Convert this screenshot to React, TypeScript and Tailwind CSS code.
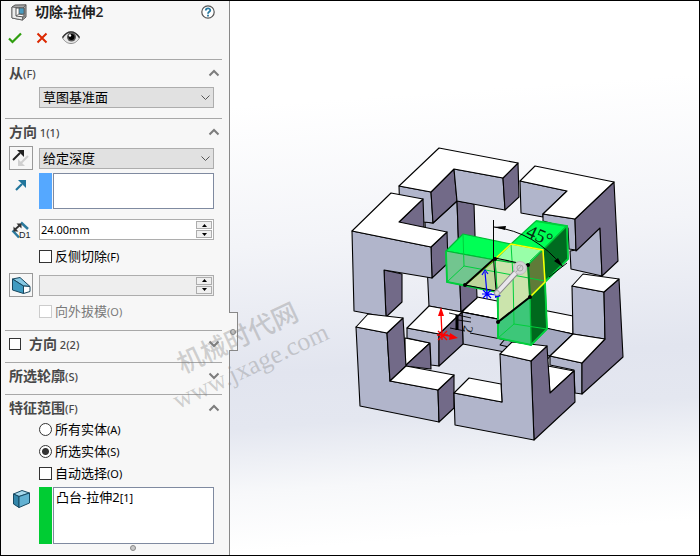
import { useState, type ReactNode } from "react";

const TOP = "#ffffff";
const FRONT = "#b1b5cb";
const SIDE = "#726a88";

interface Face {
  points: string;
  fill: string;
}

// Listed back to front, so later faces cover earlier ones
const faces: Face[] = [
  // rear lower beam
  { points: "462,312 477,297 573,316 573,334", fill: TOP },
  { points: "462,312 573,334 550,356 547,360 463,344", fill: FRONT },
  { points: "519,322 573,334 550,356 500,345", fill: "#a4a8c0" },
  // upper rear bracket
  { points: "433,223 457,201 461,312 429,306 425,222", fill: FRONT },
  { points: "457,201 474,204 477,298 461,312", fill: SIDE },
  { points: "399,186 431,192 433,223 424,222 400,217", fill: FRONT },
  { points: "431,192 454,169 457,201 433,223", fill: SIDE },
  { points: "454,169 503,178 505,210 457,201", fill: FRONT },
  { points: "503,178 518,163 519,197 505,210", fill: SIDE },
  { points: "439,148 518,163 503,178 454,169 431,192 399,186", fill: TOP },
  // upper left bracket
  { points: "399,222 423,199 424,227 400,228", fill: SIDE },
  { points: "384,270 402,274 402,302 386,317", fill: SIDE },
  { points: "431,247 447,232 448,263 432,278", fill: SIDE },
  { points: "352,231 431,247 432,278 384,270 386,317 354,311", fill: FRONT },
  { points: "352,231 391,193 423,199 399,222 447,232 431,247", fill: TOP },
  // middle left block
  { points: "405,338 430,343 405,366", fill: TOP },
  { points: "405,366 430,343 431,369", fill: SIDE },
  { points: "407,328 439,334 439,366 431,365 430,343 407,338", fill: FRONT },
  { points: "439,334 462,312 463,344 439,366", fill: SIDE },
  { points: "407,328 429,306 462,312 439,334", fill: TOP },
  // lower left bracket
  { points: "356,327 387,333 390,381 438,390 439,422 360,406", fill: FRONT },
  { points: "387,333 403,318 406,366 390,381", fill: SIDE },
  { points: "438,390 454,375 454,408 439,422", fill: SIDE },
  { points: "390,381 406,366 454,375 438,390", fill: TOP },
  { points: "356,327 368,314 403,318 387,333", fill: TOP },
  // right bracket
  { points: "550,356 582,363 582,394 575,393 574,370 550,365", fill: FRONT },
  { points: "572,286 604,292 605,339 573,334", fill: FRONT },
  { points: "604,292 619,279 623,357 582,394 582,363 605,339", fill: SIDE },
  { points: "550,356 573,334 605,339 582,363", fill: TOP },
  { points: "572,286 583,274 619,279 604,292", fill: TOP },
  // lower front bracket
  { points: "548,366 574,371 550,393", fill: TOP },
  { points: "531,361 547,346 550,393 574,371 575,402 534,440", fill: SIDE },
  { points: "454,393 502,402 500,354 531,361 534,440 455,425", fill: FRONT },
  { points: "454,393 469,378 501,384 502,402", fill: TOP },
  { points: "500,354 512,342 547,346 531,361", fill: TOP },
  // upper right bracket
  { points: "520,181 567,191 543,214 543,217 521,213", fill: FRONT },
  { points: "570,251 576,250 600,227 602,276 571,269", fill: FRONT },
  { points: "543,214 575,219 576,250 569,249 568,228 543,221", fill: FRONT },
  { points: "575,219 614,182 618,261 602,276 600,228 576,251", fill: SIDE },
  { points: "535,166 614,182 575,219 543,214 567,191 520,181", fill: TOP },
];

const cutFaces: Face[] = [
  { points: "446,251 463,234 511,244 495,260", fill: "#00ff55" },
  { points: "446,251 495,260 497,292 447,282", fill: "#72c58f" },
  { points: "511,244 536,221 567,226 543,250", fill: "#00ff55" },
  { points: "543,250 567,226 568,259 545,281", fill: "#006b20" },
  { points: "495,260 511,244 543,250 528,265", fill: "#98ffa8" },
  { points: "530,297 545,283 547,329 531,345", fill: "#00691d" },
  { points: "498,322 530,297 531,345 498,338", fill: "#3dc779" },
  { points: "528,265 543,250 545,282 530,297", fill: "#5f7b38" },
  { points: "495,260 528,265 530,297 498,322 497,292", fill: "#cbe4ac" },
  { points: "465,285 495,260 497,292", fill: "#bfd69c" },
];

function Model() {
  return (
    <svg viewBox="230 1 469 554" className="h-full w-full" role="img" aria-label="3D">
      <g stroke="#000" strokeWidth="1.1" strokeLinejoin="round">
        {faces.map((face, i) => (
          <polygon key={i} points={face.points} fill={face.fill} />
        ))}
      </g>
      <path d="M470 333L511 341M462 312L519 323" stroke="#000" fill="none" />

      {/* cut preview */}
      <g stroke="#00b935" strokeWidth="1.2" strokeLinejoin="round">
        {cutFaces.map((face, i) => (
          <polygon key={i} points={face.points} fill={face.fill} />
        ))}
      </g>
      <g stroke="#00cf3c" fill="none" strokeWidth="1">
        <path d="M463 234L464 266L447 282M464 266L545 281M511 244L513 276L514 324L498 338M514 324L547 329M530 261L567 226" />
        <path d="M446 251L447 282L497 292M498 292V338L531 345L547 329L545 282L568 259L567 226L536 221" strokeWidth="1.8" />
      </g>
      <path d="M465 285L495 259L511 244L543 250L545 282L530 297" fill="none" stroke="#ffff00" strokeWidth="1.5" />
      <g stroke="#000" strokeWidth="2" fill="none">
        <path d="M465 285L495 258M498 322L530 297" />
        <path d="M495 258L528 265M465 285L496 291" strokeWidth="1.2" />
      </g>
      <path d="M528 265L530 297" stroke="#008a22" strokeWidth="2" />
      <g fill="#000">
        <circle cx="465" cy="285" r="2" />
        <circle cx="495" cy="259" r="2" />
        <circle cx="528" cy="265" r="2" />
        <circle cx="530" cy="297" r="2" />
        <circle cx="498" cy="322" r="2" />
      </g>

      {/* angle dimension */}
      <path d="M493.5 220V259L496 290M494 227Q535 232 563 267M549 277L567 263" fill="none" stroke="#000" />
      <path d="M494 227L506 226L505 230ZM563 267L554 261L558 258Z" fill="#000" />
      <text
        transform="translate(525 236) rotate(24)"
        className="font-['Liberation_Serif',serif] text-[19px]"
        fill="#052b10"
      >
        45°
      </text>

      {/* distance dimension */}
      <g stroke="#000" fill="none">
        <path d="M449 313L471 318M458 320L471 322M450 328L465 331" strokeWidth="0.9" />
        <path d="M457 315V330" strokeWidth="3" />
      </g>
      <text
        transform="translate(464 325) rotate(100)"
        className="font-['Liberation_Serif',serif] text-[14px]"
        fill="#111"
      >
        2
      </text>

      {/* sketch origin */}
      <g stroke="#0000ff" fill="none" strokeWidth="1.2">
        <path d="M487 294L485 272M487 294L497 295M482 294H492M487 289V299M483 290L491 298M491 290L483 298" />
        <path d="M482 275L485 270L488 274" />
      </g>
      <path d="M495 292L501 296L495 298Z" fill="#0000ff" />

      {/* part origin */}
      <g stroke="#ff0000" fill="none" strokeWidth="1.3">
        <path d="M442 335L441 314M442 335L451 336M437 335H448M438 331L447 340M447 331L438 340M442 331V340" />
      </g>
      <path d="M438 316L441 307L444 316ZM450 333L458 338L449 340Z" fill="#ff0000" />

      {/* drag handle */}
      <path d="M497 293L519 269" stroke="#8a8a8a" strokeWidth="6" strokeLinecap="round" />
      <path d="M497 293L519 269" stroke="#e9e6ec" strokeWidth="4" strokeLinecap="round" />
      <circle cx="520" cy="268" r="6.5" fill="#d5d3d6" stroke="#bcbabd" />
      <circle cx="520" cy="268" r="3" fill="none" stroke="#aaa" />
      <path d="M516 272L522 265" stroke="#aaa" />
      <circle cx="497" cy="293" r="2.5" fill="#dedbe0" stroke="#999" strokeWidth="0.8" />
    </svg>
  );
}

function Chevron({ open }: { open: boolean }) {
  return (
    <svg viewBox="0 0 12 8" className="h-2 w-3" fill="none" stroke="#7d7d7d" strokeWidth="2">
      <path d={open ? "M1.5 6.5L6 2L10.5 6.5" : "M1.5 1.5L6 6L10.5 1.5"} />
    </svg>
  );
}

interface SectionProps {
  title: string;
  hint: string;
  open: boolean;
  onToggle: () => void;
  before?: ReactNode;
  children?: ReactNode;
}

function Section({ title, hint, open, onToggle, before, children }: SectionProps) {
  return (
    <section className="ml-1 mr-[7px] border-t border-[#a8a8a8] pl-1">
      <div className="flex h-[26px] items-center pr-[2px]">
        {before}
        <h2 className="flex-1 text-[14px] font-bold leading-[20px] text-[#484848]">
          {title}
          <span className="text-[11px] font-medium">{hint}</span>
        </h2>
        <button type="button" aria-label={title} aria-expanded={open} onClick={onToggle}>
          <Chevron open={open} />
        </button>
      </div>
      {children}
    </section>
  );
}

function Dropdown({ label, value }: { label: string; value: string }) {
  return (
    <div className="relative flex-1">
      <select
        aria-label={label}
        className="block h-[21px] w-full appearance-none border border-[#adadad] bg-[#e1e1e1] pl-[3px] text-[13px] leading-[19px] text-black"
      >
        <option>{value}</option>
      </select>
      <svg viewBox="0 0 9 6" className="pointer-events-none absolute right-1 top-2 h-[6px] w-[9px]" fill="none" stroke="#555">
        <path d="M0.5 0.5L4.5 4.5L8.5 0.5" />
      </svg>
    </div>
  );
}

function SpinButton({ label, down }: { label: string; down?: boolean }) {
  return (
    <button type="button" aria-label={label} className="flex h-2 w-4 items-center justify-center border border-[#adadad] bg-[#f0f0f0]">
      <svg viewBox="0 0 5 3" className="h-[3px] w-[5px]">
        <path d={down ? "M0 0H5L2.5 3Z" : "M0 3H5L2.5 0Z"} />
      </svg>
    </button>
  );
}

function NumberBox({ label, value, disabled }: { label: string; value: string; disabled?: boolean }) {
  return (
    <div className={`flex h-[21px] flex-1 items-center border border-[#adadad] pr-[1px] ${disabled ? "bg-[#eeeeee]" : "bg-white"}`}>
      <input
        aria-label={label}
        defaultValue={value}
        disabled={disabled}
        className="h-full w-0 flex-1 bg-transparent px-[1px] text-[11px] text-black outline-none"
      />
      <div className="flex flex-col gap-[1px]">
        <SpinButton label="+" />
        <SpinButton label="-" down />
      </div>
    </div>
  );
}

interface ChoiceProps {
  type: "checkbox" | "radio";
  label: string;
  hint: string;
  checked?: boolean;
  disabled?: boolean;
  name?: string;
}

function Choice({ type, label, hint, checked, disabled, name }: ChoiceProps) {
  return (
    <label className={`flex h-4 items-center gap-[3px] text-[13px] leading-4 ${disabled ? "text-[#7a7a7a]" : "text-black"}`}>
      <input
        type={type}
        name={name}
        defaultChecked={checked}
        disabled={disabled}
        className={`h-[13px] w-[13px] appearance-none border bg-white ${disabled ? "border-[#cccccc]" : "border-[#333333]"} ${
          type === "radio"
            ? "rounded-full checked:bg-[radial-gradient(circle,#333_0_3px,#fff_4px)]"
            : "checked:bg-[#333333]"
        }`}
      />
      <span>
        {label}
        <span className="text-[11px]">{hint}</span>
      </span>
    </label>
  );
}

function CutIcon() {
  return (
    <svg viewBox="0 0 16 17" className="h-[17px] w-4" stroke="#555" strokeLinejoin="round">
      <path d="M1 3L4 1L15 0.8V13L11.500 16L1 14Z" fill="#a9a9a9" />
      <path d="M1 3L11.500 4.500V16L1 14Z" fill="#ececec" strokeWidth="0.8" />
      <path d="M11.500 4.500L15 0.800" strokeWidth="0.8" />
      <path d="M5 4H13V13L5 12Z" fill="#fff" />
      <path d="M8 4H13V10H8Z" fill="#4a9bc0" strokeWidth="0.8" />
      <path d="M5 12L8 10L13 11" fill="none" strokeWidth="0.8" />
    </svg>
  );
}

function EyeIcon() {
  return (
    <svg viewBox="0 0 18 14" className="h-[14px] w-[18px]">
      <path d="M0.5 7C3 2.5 6 1 9 1S15 2.500 17.500 7C15 11 12 12.500 9 12.500S3 11 0.500 7Z" fill="#e8e8e8" stroke="#777" strokeWidth="0.8" />
      <path d="M0.5 6.500C4 1.500 6.500 1 9 1S14.500 2 17.500 6.500" fill="none" stroke="#333" strokeWidth="1.500" />
      <circle cx="9.500" cy="6" r="4.500" fill="#555" />
      <circle cx="9.500" cy="6" r="3" fill="#000" />
      <circle cx="8" cy="4.500" r="1.200" fill="#fff" />
    </svg>
  );
}

function DepthIcon() {
  return (
    <svg viewBox="0 0 20 18" className="h-[18px] w-5" fill="none">
      <path d="M10 1.500L17 8M1.500 9.500L8 16.500" stroke="#2b7a9e" strokeWidth="2.500" />
      <path d="M3.500 9L9.500 3.500" stroke="#333" strokeWidth="1.800" />
      <path d="M5.500 2.500H10.500V7.500ZM2.500 5.500V10.500H7.500Z" fill="#333" />
      <text x="8" y="17" className="font-['Liberation_Sans',sans-serif] text-[9px]" fill="#222">
        D1
      </text>
    </svg>
  );
}

function DraftIcon() {
  return (
    <svg viewBox="0 0 19 17" className="h-[17px] w-[19px]" stroke="#18475e" strokeLinejoin="round">
      <path d="M0.500 2L8 0.500L18 9.500L11.500 9Z" fill="#86c9e4" />
      <path d="M0.500 2L11.500 9V16.500L0.500 13Z" fill="#3f9bc1" />
      <path d="M11.500 9L18 9.500V14.500L11.500 16.500Z" fill="#fff" />
    </svg>
  );
}

function BodyIcon() {
  return (
    <svg viewBox="0 0 17 18" className="h-[18px] w-[17px]" stroke="#174a63" strokeLinejoin="round">
      <path d="M0.500 4L9 0.500L16.500 3L6 6.500Z" fill="#a6d8ec" />
      <path d="M0.500 4L6 6.500V17.500L0.500 14Z" fill="#3286aa" />
      <path d="M6 6.500L16.500 3V13L6 17.500Z" fill="#62b1d2" />
    </svg>
  );
}

export default function App() {
  const [open, setOpen] = useState({ from: true, dir1: true, dir2: false, contours: false, scope: true });
  const toggle = (key: keyof typeof open) => setOpen({ ...open, [key]: !open[key] });

  return (
    <div className="relative flex h-screen overflow-hidden border border-black bg-white font-['Noto_Sans','Noto_Sans_CJK_SC',sans-serif]">
      <aside className="flex w-[229px] shrink-0 flex-col border-r border-[#888888] bg-[#f7f7f7]">
        <header>
          <div className="flex h-[22px] items-center pl-[10px] pr-[14px]">
            <CutIcon />
            <h1 className="ml-2 flex-1 text-[14px] font-bold leading-5 text-[#222222]">
              切除-拉伸<span className="font-medium">2</span>
            </h1>
            <button type="button" aria-label="?">
              <svg viewBox="0 0 14 14" className="h-[14px] w-[14px]" fill="none">
                <circle cx="7" cy="7" r="6.200" stroke="#555" strokeWidth="1.200" fill="#fff" />
                <path d="M4.800 5.500C4.800 2.800 9.300 2.800 9.300 5.300C9.300 6.800 7 6.800 7 8.700" stroke="#2678a0" strokeWidth="1.800" />
                <path d="M7 9.800V11.500" stroke="#2678a0" strokeWidth="1.800" />
              </svg>
            </button>
          </div>
          <div className="mb-[6px] flex h-[30px] items-center gap-[14px] pl-[7px]">
            <button type="button" aria-label="OK">
              <svg viewBox="0 0 14 12" className="h-3 w-[14px]" fill="none" stroke="#2f9e0f" strokeWidth="2.200">
                <path d="M1 6.500L4.500 10L13 1.500" />
              </svg>
            </button>
            <button type="button" aria-label="Cancel">
              <svg viewBox="0 0 12 12" className="h-3 w-3" fill="none" stroke="#dc2800" strokeWidth="2">
                <path d="M1.500 1.500L10.500 10.500M10.500 1.500L1.500 10.500" />
              </svg>
            </button>
            <button type="button" aria-label="Preview">
              <EyeIcon />
            </button>
          </div>
        </header>

        <Section title="从" hint="(F)" open={open.from} onToggle={() => toggle("from")}>
          {open.from && (
            <div className="flex pb-[10px] pl-[30px] pr-2 pt-[1px]">
              <Dropdown label="从" value="草图基准面" />
            </div>
          )}
        </Section>

        <Section title="方向" hint=" 1(1)" open={open.dir1} onToggle={() => toggle("dir1")}>
          {open.dir1 && (
            <div className="pb-[9px] pr-2 pt-[1px]">
              <div className="flex items-center gap-[6px]">
                <button type="button" aria-label="反向" className="flex h-6 w-6 items-center justify-center border border-[#999999]">
                  <svg viewBox="0 0 18 18" className="h-[18px] w-[18px]">
                    <path d="M1 11L8 4" stroke="#222" strokeWidth="2" />
                    <path d="M5 1H12V8Z" fill="#222" />
                    <path d="M9 14L16 7" stroke="#d0d0d0" strokeWidth="2" />
                    <path d="M6 10V17H13Z" fill="#d0d0d0" />
                  </svg>
                </button>
                <Dropdown label="方向" value="给定深度" />
              </div>
              <div className="mt-[3px] flex">
                <svg viewBox="0 0 12 12" className="ml-[6px] mr-3 mt-[6px] h-3 w-3">
                  <path d="M1 11L7 5" stroke="#22769c" strokeWidth="2.200" />
                  <path d="M3 1H11V9Z" fill="#22769c" />
                </svg>
                <div className="h-9 w-[14px] border-r border-[#f7f7f7] bg-[#55a8ff]" />
                <ul role="listbox" aria-label="拉伸方向" className="h-9 flex-1 border border-[#7f8aa0] bg-white" />
              </div>
              <div className="mt-[10px] flex items-center">
                <div className="flex w-[30px] pl-[2px]">
                  <DepthIcon />
                </div>
                <NumberBox label="深度" value="24.00mm" />
              </div>
              <div className="mt-2 pl-[30px]">
                <Choice type="checkbox" label="反侧切除" hint="(F)" />
              </div>
              <div className="mt-[9px] flex items-center gap-[6px]">
                <button type="button" aria-label="拔模" className="flex h-6 w-6 items-center justify-center border border-[#999999]">
                  <DraftIcon />
                </button>
                <NumberBox label="拔模角度" value="" disabled />
              </div>
              <div className="mt-[6px] pb-[2px] pl-[30px]">
                <Choice type="checkbox" label="向外拔模" hint="(O)" disabled />
              </div>
            </div>
          )}
        </Section>

        <div className="pb-[5px]">
          <Section
            title="方向"
            hint=" 2(2)"
            open={open.dir2}
            onToggle={() => toggle("dir2")}
            before={
              <input
                type="checkbox"
                aria-label="方向 2"
                className="mr-2 h-3 w-3 appearance-none border border-[#333333] bg-white checked:bg-[#333333]"
              />
            }
          />
        </div>
        <div className="pb-[5px]">
          <Section title="所选轮廓" hint="(S)" open={open.contours} onToggle={() => toggle("contours")} />
        </div>

        <Section title="特征范围" hint="(F)" open={open.scope} onToggle={() => toggle("scope")}>
          {open.scope && (
            <div className="pr-2">
              <div className="flex flex-col gap-[6px] pl-[30px]">
                <Choice type="radio" name="scope" label="所有实体" hint="(A)" />
                <Choice type="radio" name="scope" label="所选实体" hint="(S)" checked />
                <Choice type="checkbox" label="自动选择" hint="(O)" />
              </div>
              <div className="mt-[6px] flex">
                <div className="flex w-[30px] pl-1 pt-[3px]">
                  <BodyIcon />
                </div>
                <div className="h-[57px] w-[14px] border-r border-[#f7f7f7] bg-[#00cc33]" />
                <ul role="listbox" aria-label="受影响的实体" className="h-[57px] flex-1 border border-[#7f8aa0] bg-white pl-[2px] text-[13px] leading-[18px] text-black">
                  <li role="option" aria-selected="false">
                    凸台-拉伸2<span className="text-[11px]">[1]</span>
                  </li>
                </ul>
              </div>
            </div>
          )}
        </Section>
        <div className="mx-auto mt-[1px] h-[6px] w-[6px] translate-x-[18px] rounded-full border border-[#888888] bg-[#c8c8c8]" />
      </aside>

      <main className="min-w-0 flex-1 bg-[linear-gradient(176deg,#ffffff_18%,#f3f4f8_42%,#e2e5ef_64%,#e4e7f0_73%,#f7f8fa_84%,#ffffff_94%)]">
        <Model />
      </main>

      <button
        type="button"
        aria-label="折叠"
        className="absolute left-[228px] top-[311px] flex h-[39px] w-[9px] items-center justify-center border border-l-0 border-[#888888] bg-[#f7f7f7]"
      >
        <span className="h-[6px] w-[6px] rounded-full border border-[#888888] bg-[#c8c8c8]" />
      </button>

      {/* watermark */}
      <div className="pointer-events-none absolute left-[153px] top-[319px] w-[180px] -rotate-[25deg] text-center text-[#808080]/35">
        <p className="text-[26px] font-medium leading-8">机械时代网</p>
        <p className="font-['Liberation_Serif',serif] text-[26px] leading-8">www.jxage.com</p>
      </div>
    </div>
  );
}
